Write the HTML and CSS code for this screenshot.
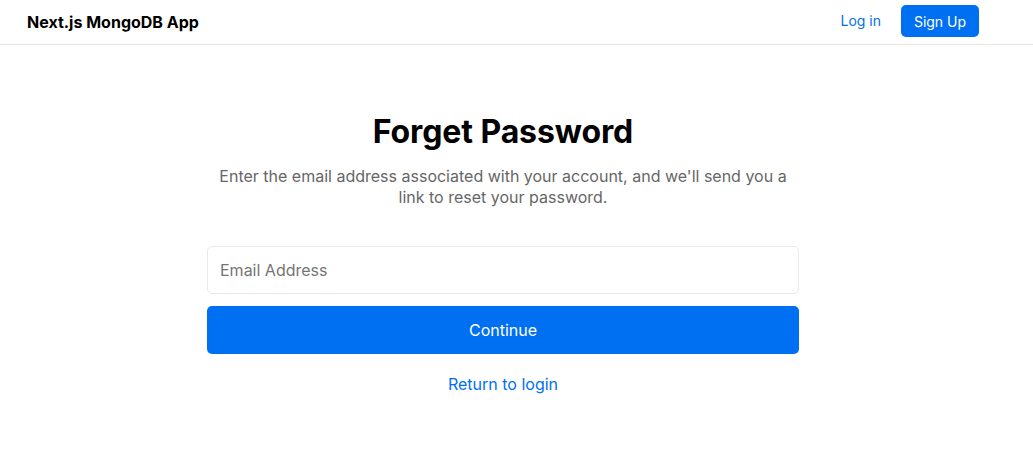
FILE: index.html
```html
<!DOCTYPE html>
<html>
<head>
<meta charset="utf-8">
<link rel="stylesheet" href="styles.css">
</head>
<body>
<header class="nav">
  <a class="brand" href="#">Next.js MongoDB App</a>
  <div class="nav-actions">
    <a class="nav-link" href="#">Log in</a>
    <a class="nav-btn" href="#">Sign Up</a>
  </div>
</header>
<main class="page">
  <div class="panel">
    <h1 class="title">Forget Password</h1>
    <p class="subtitle">Enter the email address associated with your account, and we'll send you a link to reset your password.</p>
    <form class="form">
      <input class="input" type="email" placeholder="Email Address">
      <button class="btn" type="button">Continue</button>
    </form>
    <a class="return" href="#">Return to login</a>
  </div>
</main>
</body>
</html>
```
FILE: styles.css
```css
* { box-sizing: border-box; }
html, body { margin: 0; padding: 0; background: #fff; }
body { font-family: Inter, "Noto Sans", sans-serif; color: #000; }
a { text-decoration: none; }

.nav {
  height: 45px;
  border-bottom: 1px solid #e5e5e5;
  display: flex;
  align-items: center;
  justify-content: space-between;
  padding: 0 54px 0 27px;
}
.brand { color: #000; font-weight: 700; font-size: 16px; }
.nav-actions { display: flex; align-items: center; gap: 20px; }
.nav-link { color: #0070f3; font-size: 14px; margin-top: -4px; }
.nav-btn {
  background: #0070f3; color: #fff; font-size: 14px;
  height: 32px; width: 78px; border-radius: 5px;
  display: flex; align-items: center; justify-content: center;
  margin-top: -2px;
}

.page { display: flex; justify-content: center; padding: 67px 27px 0 0; }
.panel { width: 592px; display: flex; flex-direction: column; align-items: center; }
.title { margin: 0; font-size: 32px; font-weight: 700; line-height: 40px; letter-spacing: -0.1px; }
.subtitle {
  margin: 14px 0 0; color: #666; font-size: 16px; line-height: 21px;
  text-align: center; width: 580px;
}
.form { width: 100%; margin-top: 38px; display: flex; flex-direction: column; gap: 12px; }
.input {
  width: 100%; height: 48px; border: 1px solid #eaeaea; border-radius: 5px;
  padding: 0 12px; font-family: inherit; font-size: 16px; color: #000;
}
.input::placeholder { color: #757575; }
.btn {
  width: 100%; height: 48px; border: none; border-radius: 5px; background: #0070f3;
  color: #fff; font-family: inherit; font-size: 16px;
}
.return { margin-top: 20px; color: #0070f3; font-size: 16px; line-height: 20px; }
```
